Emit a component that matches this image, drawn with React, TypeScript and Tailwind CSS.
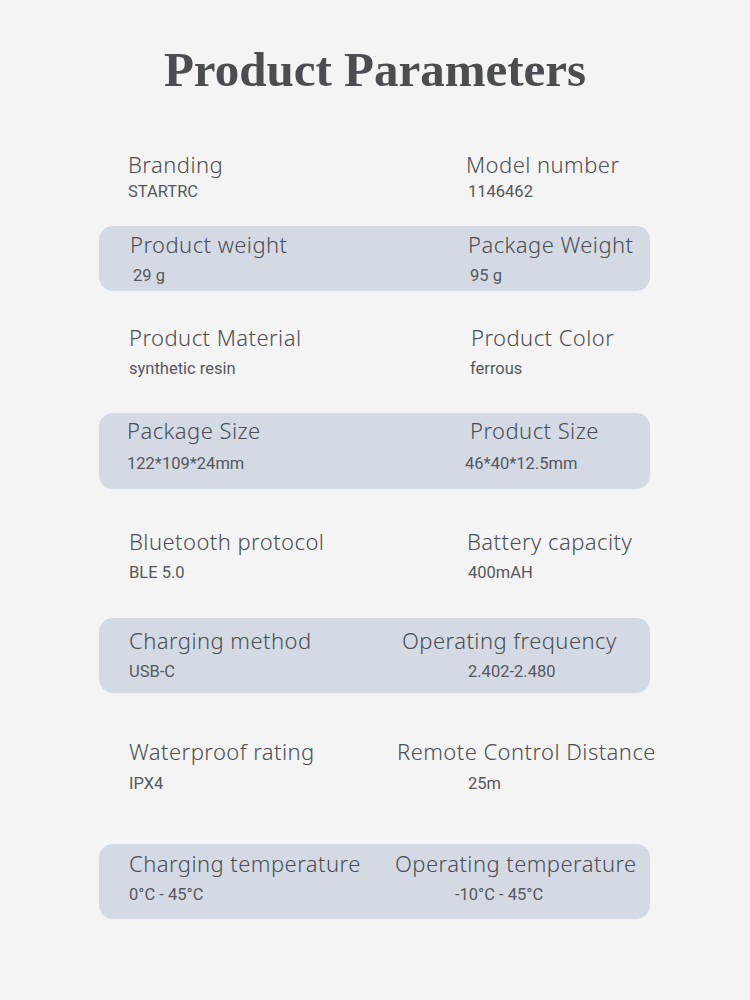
import React from "react";

type Cell = { label: string; value: string; lx: string; vx: string };
type Row = { band: boolean; h: string; pt: string; gap: string; left: Cell; right: Cell; mt: string };

const rows: Row[] = [
  { band: false, mt: "mt-[0px]", h: "h-[70px]", pt: "pt-[0px]", gap: "mt-[3px]",
    left: { label: "Branding", value: "STARTRC", lx: "ml-[29px]", vx: "ml-[29px]" },
    right: { label: "Model number", value: "1146462", lx: "ml-[97px]", vx: "ml-[99px]" } },
  { band: true, mt: "mt-[6px]", h: "h-[65px]", pt: "pt-[4px]", gap: "mt-[7px]",
    left: { label: "Product weight", value: "29 g", lx: "ml-[31px]", vx: "ml-[34px]" },
    right: { label: "Package Weight", value: "95 g", lx: "ml-[99px]", vx: "ml-[101px]" } },
  { band: false, mt: "mt-[32px]", h: "h-[90px]", pt: "pt-[0px]", gap: "mt-[7px]",
    left: { label: "Product Material", value: "synthetic resin", lx: "ml-[30px]", vx: "ml-[30px]" },
    right: { label: "Product Color", value: "ferrous", lx: "ml-[102px]", vx: "ml-[101px]" } },
  { band: true, mt: "mt-[0px]", h: "h-[76px]", pt: "pt-[3px]", gap: "mt-[9px]",
    left: { label: "Package Size", value: "122*109*24mm", lx: "ml-[28px]", vx: "ml-[28px]" },
    right: { label: "Product Size", value: "46*40*12.5mm", lx: "ml-[101px]", vx: "ml-[96px]" } },
  { band: false, mt: "mt-[38px]", h: "h-[91px]", pt: "pt-[0px]", gap: "mt-[7px]",
    left: { label: "Bluetooth protocol", value: "BLE 5.0", lx: "ml-[30px]", vx: "ml-[30px]" },
    right: { label: "Battery capacity", value: "400mAH", lx: "ml-[98px]", vx: "ml-[99px]" } },
  { band: true, mt: "mt-[0px]", h: "h-[75px]", pt: "pt-[8px]", gap: "mt-[7px]",
    left: { label: "Charging method", value: "USB-C", lx: "ml-[30px]", vx: "ml-[30px]" },
    right: { label: "Operating frequency", value: "2.402-2.480", lx: "ml-[33px]", vx: "ml-[99px]" } },
  { band: false, mt: "mt-[44px]", h: "h-[107px]", pt: "pt-[0px]", gap: "mt-[8px]",
    left: { label: "Waterproof rating", value: "IPX4", lx: "ml-[30px]", vx: "ml-[30px]" },
    right: { label: "Remote Control Distance", value: "25m", lx: "ml-[28px]", vx: "ml-[99px]" } },
  { band: true, mt: "mt-[0px]", h: "h-[75px]", pt: "pt-[5px]", gap: "mt-[7px]",
    left: { label: "Charging temperature", value: "0°C - 45°C", lx: "ml-[30px]", vx: "ml-[30px]" },
    right: { label: "Operating temperature", value: "-10°C - 45°C", lx: "ml-[26px]", vx: "ml-[86px]" } },
];

function CellView({ c, gap }: { c: Cell; gap: string }) {
  return (
    <div className="flex flex-col whitespace-nowrap">
      <div className={`${c.lx} text-[22px] leading-[28px] font-light tracking-[0.02em] text-[#4b4e53] [font-family:'Noto_Sans',sans-serif]`}>
        {c.label}
      </div>
      <div className={`${c.vx} ${gap} text-[16.5px] leading-[22px] text-[#55585d] [font-family:Roboto,sans-serif]`}>
        {c.value}
      </div>
    </div>
  );
}

export default function App() {
  return (
    <div className="w-[750px] h-[1000px] bg-[#f4f4f4] overflow-hidden">
      <h1 className="pt-[38px] text-center text-[49px] leading-[64px] font-bold text-[#4b4d50] [font-family:'Liberation_Serif',serif]">
        Product Parameters
      </h1>
      <div className="mt-[48px] flex flex-col">
        {rows.map((r, i) => (
          <div
            key={i}
            className={`${r.mt} ${r.h} ${r.pt} mx-[99px] w-[551px] flex ${r.band ? "bg-[#d3dae4] rounded-[14px]" : ""}`}
          >
            <div className="w-[270px] shrink-0">
              <CellView c={r.left} gap={r.gap} />
            </div>
            <div className="flex-1">
              <CellView c={r.right} gap={r.gap} />
            </div>
          </div>
        ))}
      </div>
    </div>
  );
}
